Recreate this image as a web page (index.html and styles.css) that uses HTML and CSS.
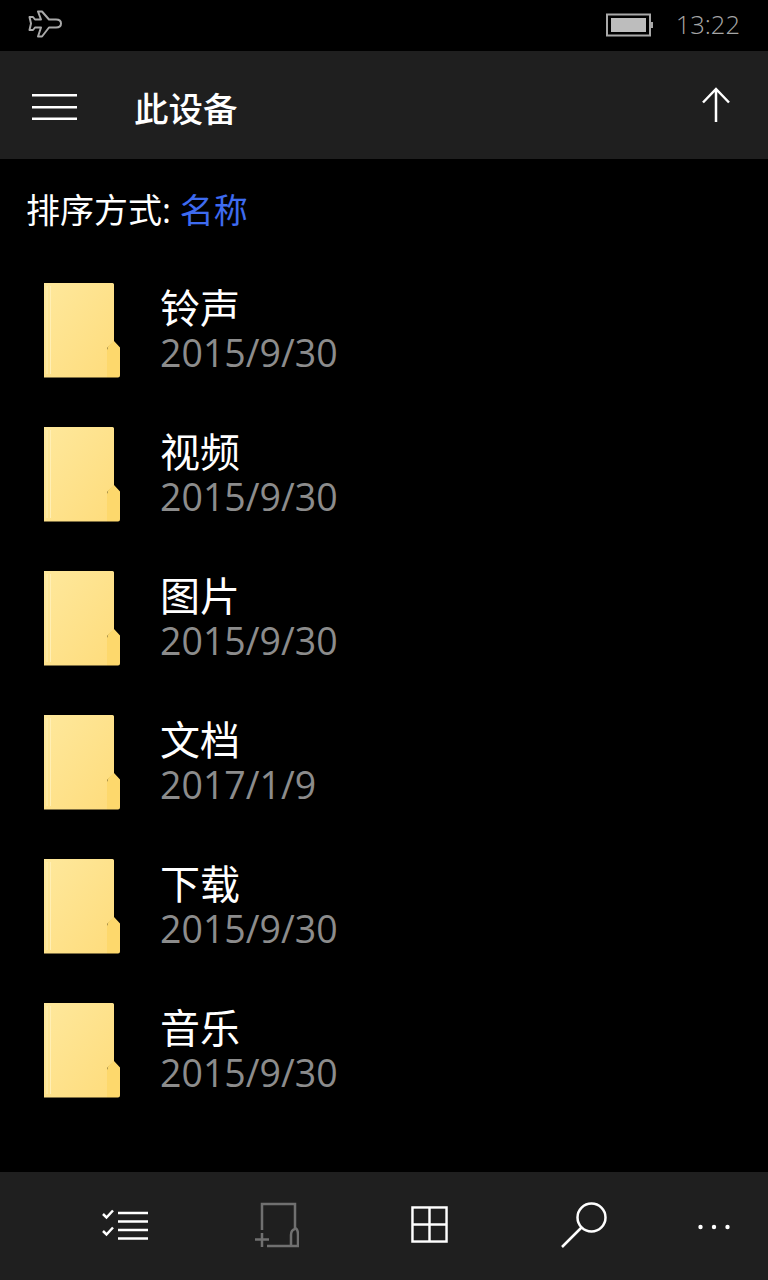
FILE: index.html
```html
<!DOCTYPE html>
<html lang="zh-CN">
<head>
    <meta charset="UTF-8">
    <title>此设备</title>
    <link rel="stylesheet" href="styles.css">
</head>
<body>
<svg class="defs" width="0" height="0">
    <defs>
        <linearGradient id="folder-back" x1="0" y1="0" x2="1" y2="1">
            <stop offset="0" stop-color="#fee89c"/>
            <stop offset="1" stop-color="#fedc7c"/>
        </linearGradient>
        <symbol id="folder" viewBox="0 0 76 95">
            <path d="M0 0H68.500Q70 0 70 1.500V59L63 65V94.500H0Z" fill="url(#folder-back)"/>
            <path d="M3 3V91" stroke="#ffefb4" stroke-width="1"/>
            <path d="M6.500 3V91" stroke="#ffefb4" stroke-width="1"/>
            <path d="M70 58L76 64.500V92.500Q76 94.500 74 94.500H63V67Q63 64 65 62.500Z" fill="#fdd86c"/>
        </symbol>
    </defs>
</svg>

<div class="status-bar">
    <svg class="plane" width="34" height="28" viewBox="0 0 34 28" fill="none" stroke="#a9a9a9" stroke-width="2">
        <path d="M10 1.500H14L21 9.500H28Q33 9.500 33 13.500Q33 17.500 28 17.500H21L14 26.500H10L13 17.500H7L5 20H1.500L3 13.500L1.500 7H5L7 9.500H13Z" stroke-linejoin="round"/>
    </svg>
    <div class="status-right">
        <svg class="battery" width="47" height="24" viewBox="0 0 47 24">
            <rect x="1" y="1.500" width="43" height="21" fill="none" stroke="#a9a9a9" stroke-width="2"/>
            <rect x="5" y="5" width="35" height="14" fill="#bdbdbd"/>
            <rect x="45" y="9" width="2" height="6" fill="#a9a9a9"/>
        </svg>
        <span class="clock">13:22</span>
    </div>
</div>

<header class="title-bar">
    <svg class="menu-icon" width="45" height="26" viewBox="0 0 45 26" fill="#fff">
        <rect y="0" width="45" height="2.500"/>
        <rect y="12" width="45" height="2.500"/>
        <rect y="23.500" width="45" height="2.500"/>
    </svg>
    <h1 class="title">此设备</h1>
    <svg class="up-icon" width="30" height="36" viewBox="0 0 30 36" fill="none" stroke="#fff" stroke-width="2.500">
        <path d="M15 35V2M2 15.500L15 2L28 15.500"/>
    </svg>
</header>

<p class="sort">排序方式: <span class="sort-value">名称</span></p>

<ul class="folders">
    <li class="folder">
        <svg class="folder-icon"><use href="#folder"/></svg>
        <div class="folder-text"><div class="folder-name">铃声</div><div class="folder-date">2015/9/30</div></div>
    </li>
    <li class="folder">
        <svg class="folder-icon"><use href="#folder"/></svg>
        <div class="folder-text"><div class="folder-name">视频</div><div class="folder-date">2015/9/30</div></div>
    </li>
    <li class="folder">
        <svg class="folder-icon"><use href="#folder"/></svg>
        <div class="folder-text"><div class="folder-name">图片</div><div class="folder-date">2015/9/30</div></div>
    </li>
    <li class="folder">
        <svg class="folder-icon"><use href="#folder"/></svg>
        <div class="folder-text"><div class="folder-name">文档</div><div class="folder-date">2017/1/9</div></div>
    </li>
    <li class="folder">
        <svg class="folder-icon"><use href="#folder"/></svg>
        <div class="folder-text"><div class="folder-name">下载</div><div class="folder-date">2015/9/30</div></div>
    </li>
    <li class="folder">
        <svg class="folder-icon"><use href="#folder"/></svg>
        <div class="folder-text"><div class="folder-name">音乐</div><div class="folder-date">2015/9/30</div></div>
    </li>
</ul>

<footer class="app-bar">
    <svg class="tool-select" width="46" height="32" viewBox="0 0 46 32" fill="none" stroke="#fff" stroke-width="2.500">
        <path d="M1 5L4.500 8.500L11 1.500M1 22L4.500 25.500L11 18.500"/>
        <path d="M16 4H46M16 12.500H46M16 21H46M16 29.500H46"/>
    </svg>
    <svg class="tool-new" width="44" height="46" viewBox="0 0 44 46" fill="none" stroke="#707070" stroke-width="2.500">
        <path d="M7 28V2H40V27M40 27Q36 28 36 33V43M12 44H43V33Q43 27 40 26"/>
        <path d="M0 37.500H14M7 31V45"/>
    </svg>
    <svg class="tool-grid" width="37" height="37" viewBox="0 0 38 38" fill="none" stroke="#fff" stroke-width="2.500">
        <rect x="1.500" y="1.500" width="35" height="35"/>
        <path d="M19 1.500V36.500M1.500 19H36.500"/>
    </svg>
    <svg class="tool-search" width="46" height="46" viewBox="0 0 46 46" fill="none" stroke="#fff" stroke-width="2.500">
        <circle cx="30.500" cy="15.500" r="14"/>
        <path d="M20.500 25.500L1 45"/>
    </svg>
    <svg class="tool-more" width="32" height="6" viewBox="0 0 32 6" fill="#fff">
        <circle cx="2.500" cy="3" r="2.200"/>
        <circle cx="16" cy="3" r="2.200"/>
        <circle cx="29.500" cy="3" r="2.200"/>
    </svg>
</footer>
</body>
</html>
```

FILE: styles.css
```css
* {
    box-sizing: border-box;
}
html, body {
    height: 100%;
}
body {
    margin: 0;
    background: #000;
    color: #fff;
    display: flex;
    flex-direction: column;
    font-family: "Open Sans", "Noto Sans CJK SC", sans-serif;
}
.defs {
    position: absolute;
}
.status-bar {
    height: 51px;
    display: flex;
    justify-content: space-between;
    align-items: center;
    padding: 0 28px;
}
.plane {
    margin-bottom: 3px;
}
.status-right {
    display: flex;
    align-items: center;
    gap: 23px;
}
.battery {
    margin-bottom: 2px;
}
.clock {
    font-size: 25.500px;
    font-weight: 300;
    line-height: 32px;
    margin-bottom: 4px;
    color: #a6a6a6;
}
.title-bar {
    height: 108px;
    background: #1f1f1f;
    display: flex;
    align-items: center;
    padding: 0 37px 0 32px;
}
.menu-icon {
    margin-top: 4px;
}
.title {
    margin: 8px 0 0 57px;
    flex: 1;
    font-size: 34.500px;
    font-weight: 500;
    line-height: 1;
}
.up-icon {
    margin-top: -1px;
}
.sort {
    margin: 30px 0 0 26px;
    font-size: 34px;
    line-height: 42px;
}
.sort-value {
    color: #3e6bf0;
}
.folders {
    list-style: none;
    margin: 0;
    padding: 52px 0 0 44px;
    flex: 1;
}
.folder {
    display: flex;
    height: 144px;
}
.folder-icon {
    width: 76px;
    height: 95px;
    flex: none;
}
.folder-text {
    margin: 1px 0 0 40px;
}
.folder-name {
    font-size: 40px;
    line-height: 48px;
}
.folder-date {
    font-size: 37.500px;
    line-height: 41px;
    color: #8c8c8c;
}
.app-bar {
    height: 108px;
    background: #1f1f1f;
    display: flex;
    align-items: center;
    padding: 0 24px 0 102px;
}
.tool-select {
    margin: -3px 0 0 0;
}
.tool-new {
    margin: -2px 0 0 107px;
}
.tool-grid {
    margin: -3px 0 0 112px;
}
.tool-search {
    margin: -2px 0 0 113px;
}
.tool-more {
    margin: 2px 0 0 91px;
}
```
